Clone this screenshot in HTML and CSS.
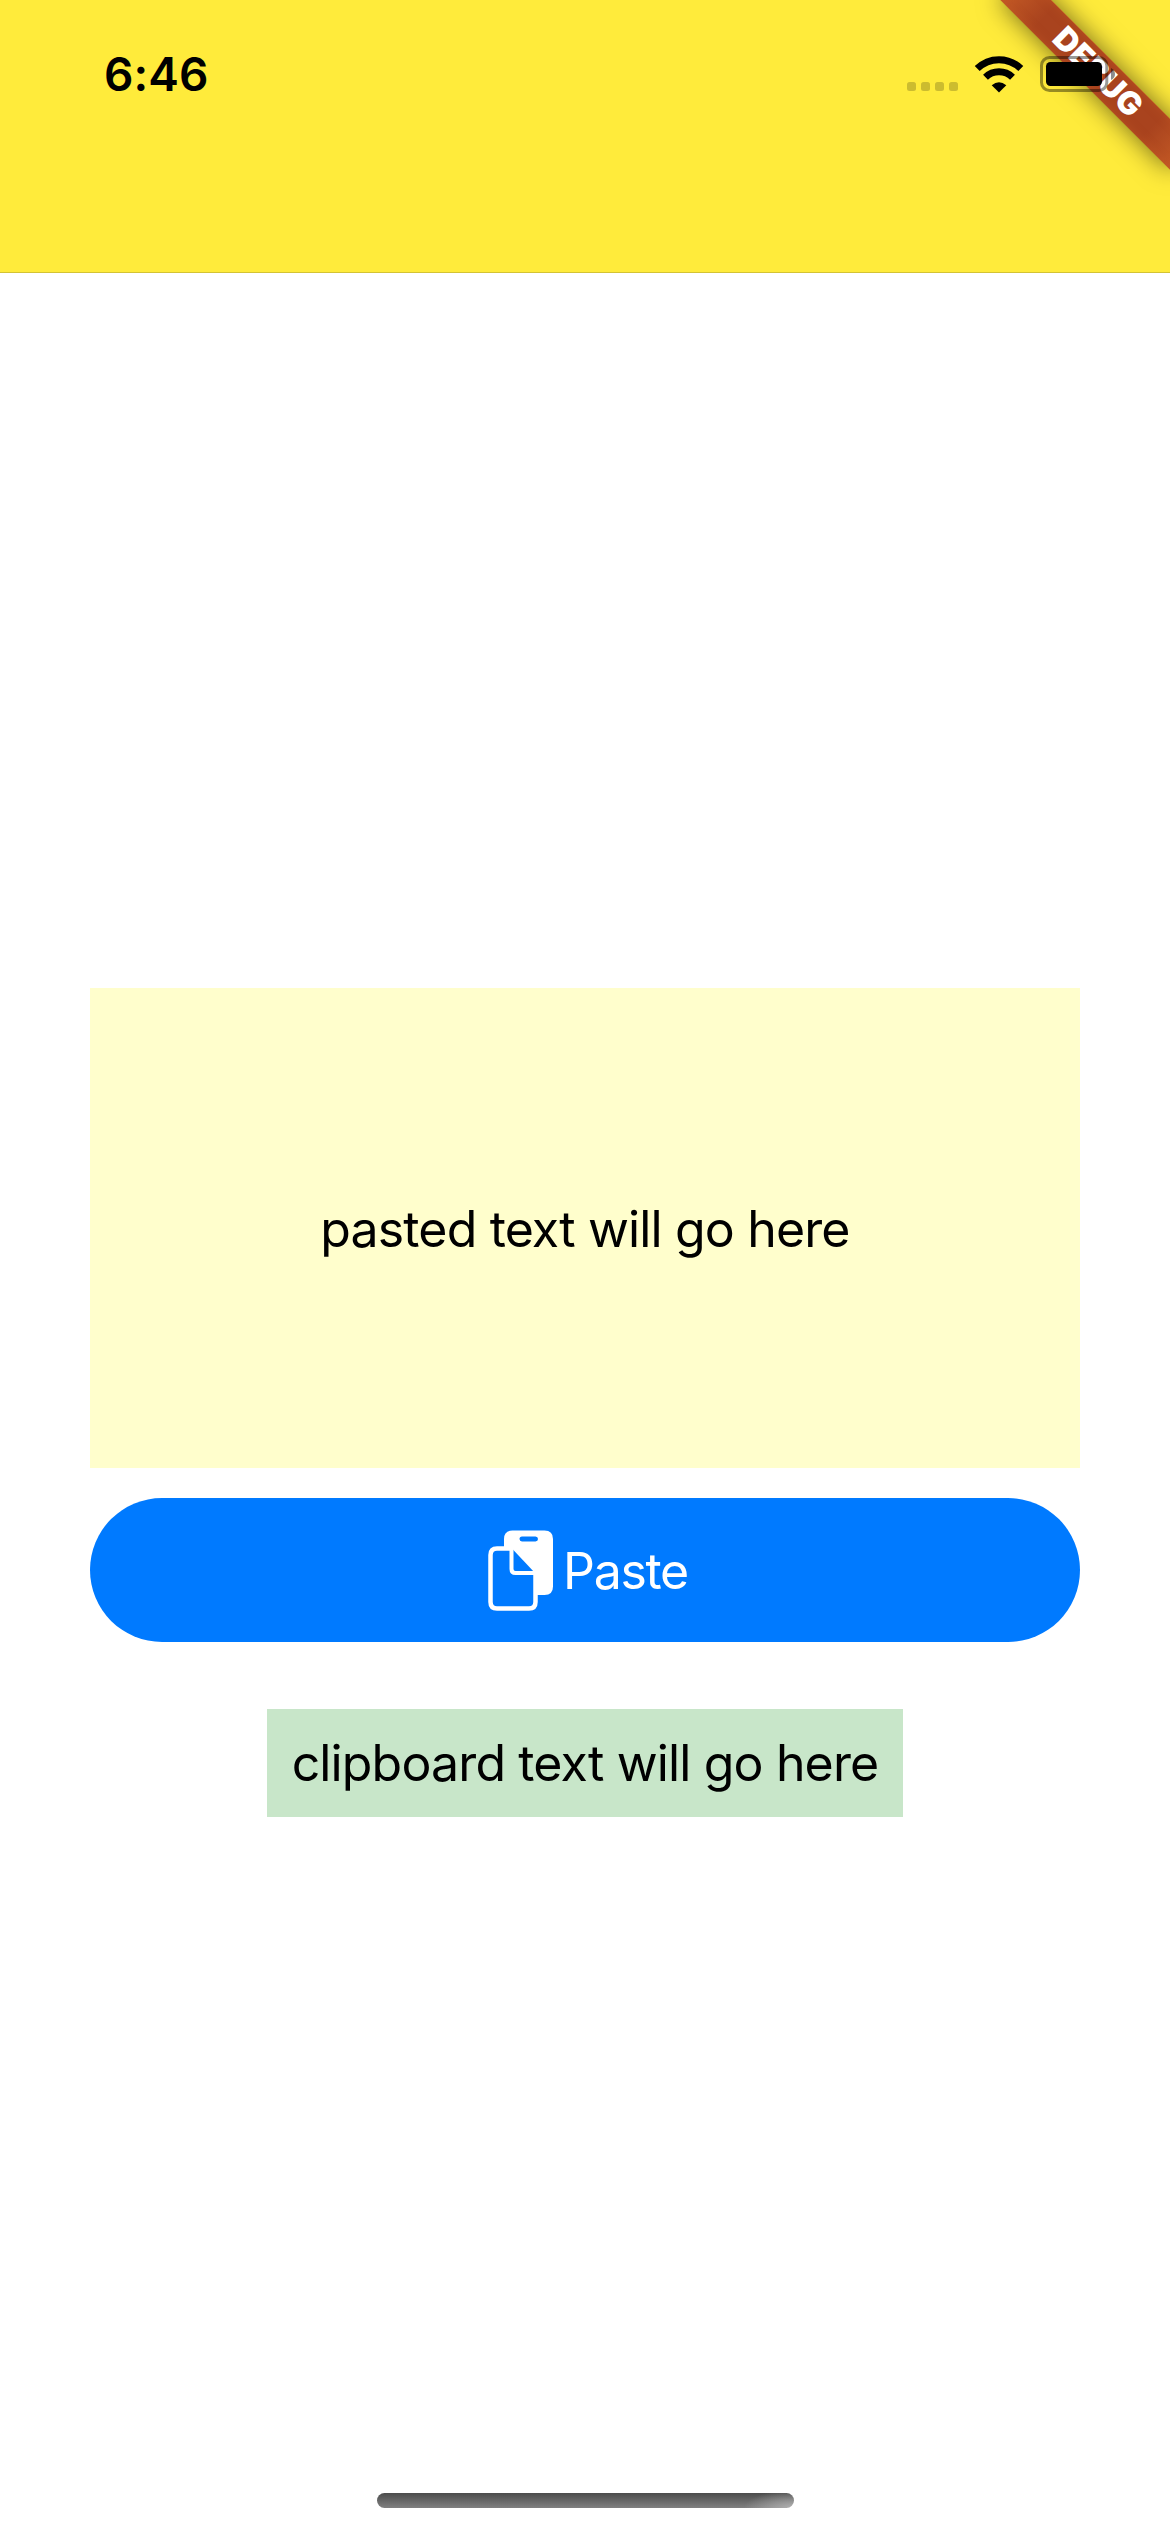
FILE: index.html
```html
<!DOCTYPE html>
<html lang="en">
<head>
<meta charset="utf-8">
<title>Paste</title>
<link rel="stylesheet" href="styles.css">
</head>
<body>
<div class="screen">
  <header class="nav">
    <div class="status">
      <span class="time">6:46</span>
      <span class="indicators">
        <svg class="signal" width="51" height="9" viewBox="0 0 51 9"><rect width="9" height="9" rx="2.5"/><rect x="14" width="9" height="9" rx="2.5"/><rect x="28" width="9" height="9" rx="2.5"/><rect x="42" width="9" height="9" rx="2.5"/></svg>
        <svg class="wifi" width="50" height="37" viewBox="0 0 50 37"><path d="M3.2 12.6A31 31 0 0 1 46.800 12.600M11.500 21.200A19.500 19.500 0 0 1 38.500 21.200" fill="none" stroke="#000" stroke-width="7"/><path d="M25 36.500L17.700 29.200Q25 23.300 32.300 29.200Z"/></svg>
        <svg class="battery" width="76" height="36" viewBox="0 0 76 36"><rect x="1.500" y="1.500" width="65.300" height="33" rx="8" fill="none" stroke="#000" stroke-width="3" opacity=".4"/><rect x="6" y="6" width="56" height="24" rx="4.500"/><path d="M71 12Q75 14 75 18T71 24Z" opacity=".45"/></svg>
      </span>
    </div>
    <div class="ribbon"><span class="ribbon-band"><span class="ribbon-text">DEBUG</span></span></div>
  </header>
  <main class="content">
    <div class="pasted"><span class="pasted-text">pasted text will go here</span></div>
    <button class="paste">
      <svg class="paste-icon" width="66" height="82" viewBox="0 0 66 82"><path fill="#fff" fill-rule="evenodd" d="M16 18V9Q16 .5 24.500 .5H56.500Q65 .5 65 9V56.500Q65 65 56.500 65H49V44L22 17ZM34 6.500A2.200 2.200 0 0 0 34 11.500H47.500A2.200 2.200 0 0 0 47.500 6.500Z"/><path fill="#007aff" stroke="#fff" stroke-width="4.500" stroke-linejoin="round" d="M23.500 18.500H9Q2.500 18.500 2.500 25V72Q2.500 78.500 9 78.500H41Q47.500 78.500 47.500 72V43Z"/><path fill="#007aff" stroke="#fff" stroke-width="4" d="M23.500 18V39Q23.500 43 27.500 43H47"/></svg>
      <span class="paste-label">Paste</span>
    </button>
    <div class="clipboard"><span class="clipboard-text">clipboard text will go here</span></div>
  </main>
  <footer class="home"><span class="home-bar"></span></footer>
</div>
</body>
</html>
```
FILE: styles.css
```css
* { box-sizing: border-box; }
body { margin: 0; background: #fff; font-family: Inter, "Liberation Sans", sans-serif; color: #000; }
.screen { display: flex; flex-direction: column; width: 1170px; height: 2532px; overflow: hidden; }
.nav { position: relative; flex: none; height: 273px; background: #ffeb3b; border-bottom: 1px solid #d3c334; }
.status { display: flex; justify-content: space-between; align-items: center; height: 148px; padding: 0 54px 0 104px; }
.time { font-size: 46px; font-weight: 600; line-height: 56px; letter-spacing: .1px; }
.indicators { position: relative; z-index: 1; display: flex; align-items: center; }
.signal { fill: rgba(0, 0, 0, .2); margin: 25px 16px 0 0; }
.wifi { margin-right: 16px; }
.ribbon { position: absolute; top: 0; right: 0; width: 300px; height: 272px; overflow: hidden; }
.ribbon-band { position: absolute; top: 84px; left: 180px; width: 240px; height: 36px; display: flex; align-items: center; justify-content: center; transform: rotate(45deg); transform-origin: 120px -84px; background: linear-gradient(90deg, #c35925, #a9431e 18%, #a9431e 82%, #c35925); box-shadow: 0 0 26px rgba(0, 0, 0, .55), inset 0 0 10px rgba(195, 89, 37, .6); }
.ribbon-text { color: #fff; font-size: 32px; font-weight: 900; line-height: 36px; }
.content { flex: 1; display: flex; flex-direction: column; align-items: center; padding: 715px 90px 0; }
.pasted { display: flex; align-items: center; justify-content: center; width: 990px; height: 480px; padding-top: 2px; background: #fffecc; }
.pasted-text, .clipboard-text { font-size: 50px; line-height: 60px; letter-spacing: -.85px; white-space: nowrap; }
.paste { display: flex; align-items: center; justify-content: flex-start; width: 990px; height: 144px; margin: 30px 0 66.500px; padding: 0 0 0 398px; border: 0; border-radius: 72px; background: #007aff; color: #fff; font-family: inherit; }
.paste-icon { margin-top: 2px; }
.paste-label { margin: 1px 0 0 9px; font-size: 50px; line-height: 60px; letter-spacing: -1.3px; }
.clipboard { display: flex; align-items: center; justify-content: center; width: 636px; height: 108px; background: #c8e6c9; }
.home { display: flex; justify-content: center; height: 39px; }
.home-bar { width: 417px; height: 15px; border-radius: 8px; background: radial-gradient(ellipse 50px 18px at 100% 100%, rgba(190, 190, 190, .8), rgba(190, 190, 190, 0)), linear-gradient(#4c4c4c, #808080); }
```
